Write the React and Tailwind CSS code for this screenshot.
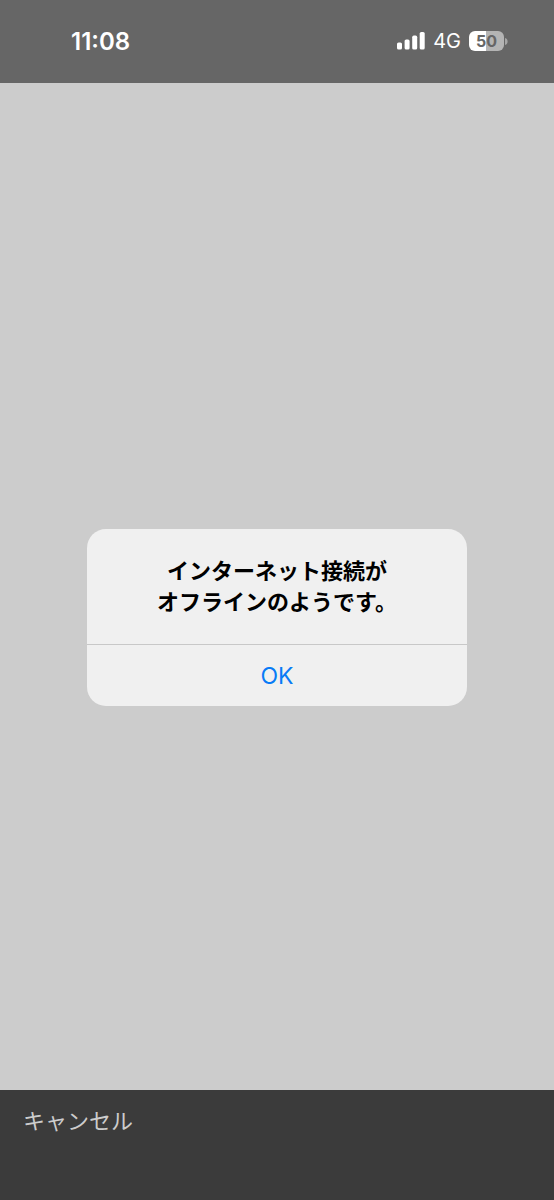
function SignalIcon() {
  return (
    <svg className="h-[18px] w-7 shrink-0" viewBox="0 0 28 18" fill="#fff" role="img" aria-label="Signal">
      <rect x="0" y="10.5" width="5" height="7" rx="1.6" />
      <rect x="7.6" y="7.5" width="5" height="10" rx="1.6" />
      <rect x="15.2" y="3.6" width="5" height="13.9" rx="1.6" />
      <rect x="22.7" y="0" width="5" height="17.5" rx="1.6" />
    </svg>
  );
}

function Battery() {
  return (
    <div className="flex items-center gap-px">
      <div className="flex h-5 w-[35px] items-center justify-center rounded-[6px] bg-linear-to-r from-white from-50% to-[#b4b4b4] to-50% text-[16px] leading-5 font-bold text-[#666]">
        50
      </div>
      <svg className="h-[7px] w-[3px]" viewBox="0 0 3 7" fill="#a6a6a6" aria-hidden="true">
        <path d="M0 0C1.8.5 2.6 1.8 2.6 3.5S1.8 6.5 0 7Z" />
      </svg>
    </div>
  );
}

function StatusBar() {
  return (
    <header className="flex h-[83px] items-start justify-between bg-[#666] pt-[27px] pr-[46px] pl-[71px] text-white">
      <time className="text-[24px] leading-[30px] font-semibold">11:08</time>
      <div className="flex h-7 items-center">
        <SignalIcon />
        <span className="ml-2 text-[20px] leading-7">4G</span>
        <div className="ml-2">
          <Battery />
        </div>
      </div>
    </header>
  );
}

function OfflineAlert() {
  return (
    <section
      role="alertdialog"
      aria-modal="true"
      aria-labelledby="alert-title"
      className="w-full max-w-[380px] overflow-hidden rounded-[19px] bg-[#f0f0f0]"
    >
      <h1
        id="alert-title"
        className="px-6 pt-[27px] pb-[26px] text-center text-[22px] leading-[31px] font-bold text-black"
      >
        インターネット接続が
        <br />
        オフラインのようです。
      </h1>
      <button
        type="button"
        className="block h-[62px] w-full border-t border-[#c8c8c8] pt-px text-[23px] leading-8 text-[#087bf6]"
      >
        OK
      </button>
    </section>
  );
}

export default function App() {
  return (
    <div className="flex min-h-screen flex-col bg-[#cccccc] font-[Inter,'Noto_Sans_CJK_JP',sans-serif]">
      <StatusBar />
      <main className="flex flex-1 items-center justify-center px-6 pt-[62px]">
        <OfflineAlert />
      </main>
      <footer className="h-[110px] bg-[#3b3b3b] px-[23px] pt-4">
        <button type="button" className="text-[22px] leading-[31px] text-[#cccccc]">
          キャンセル
        </button>
      </footer>
    </div>
  );
}
